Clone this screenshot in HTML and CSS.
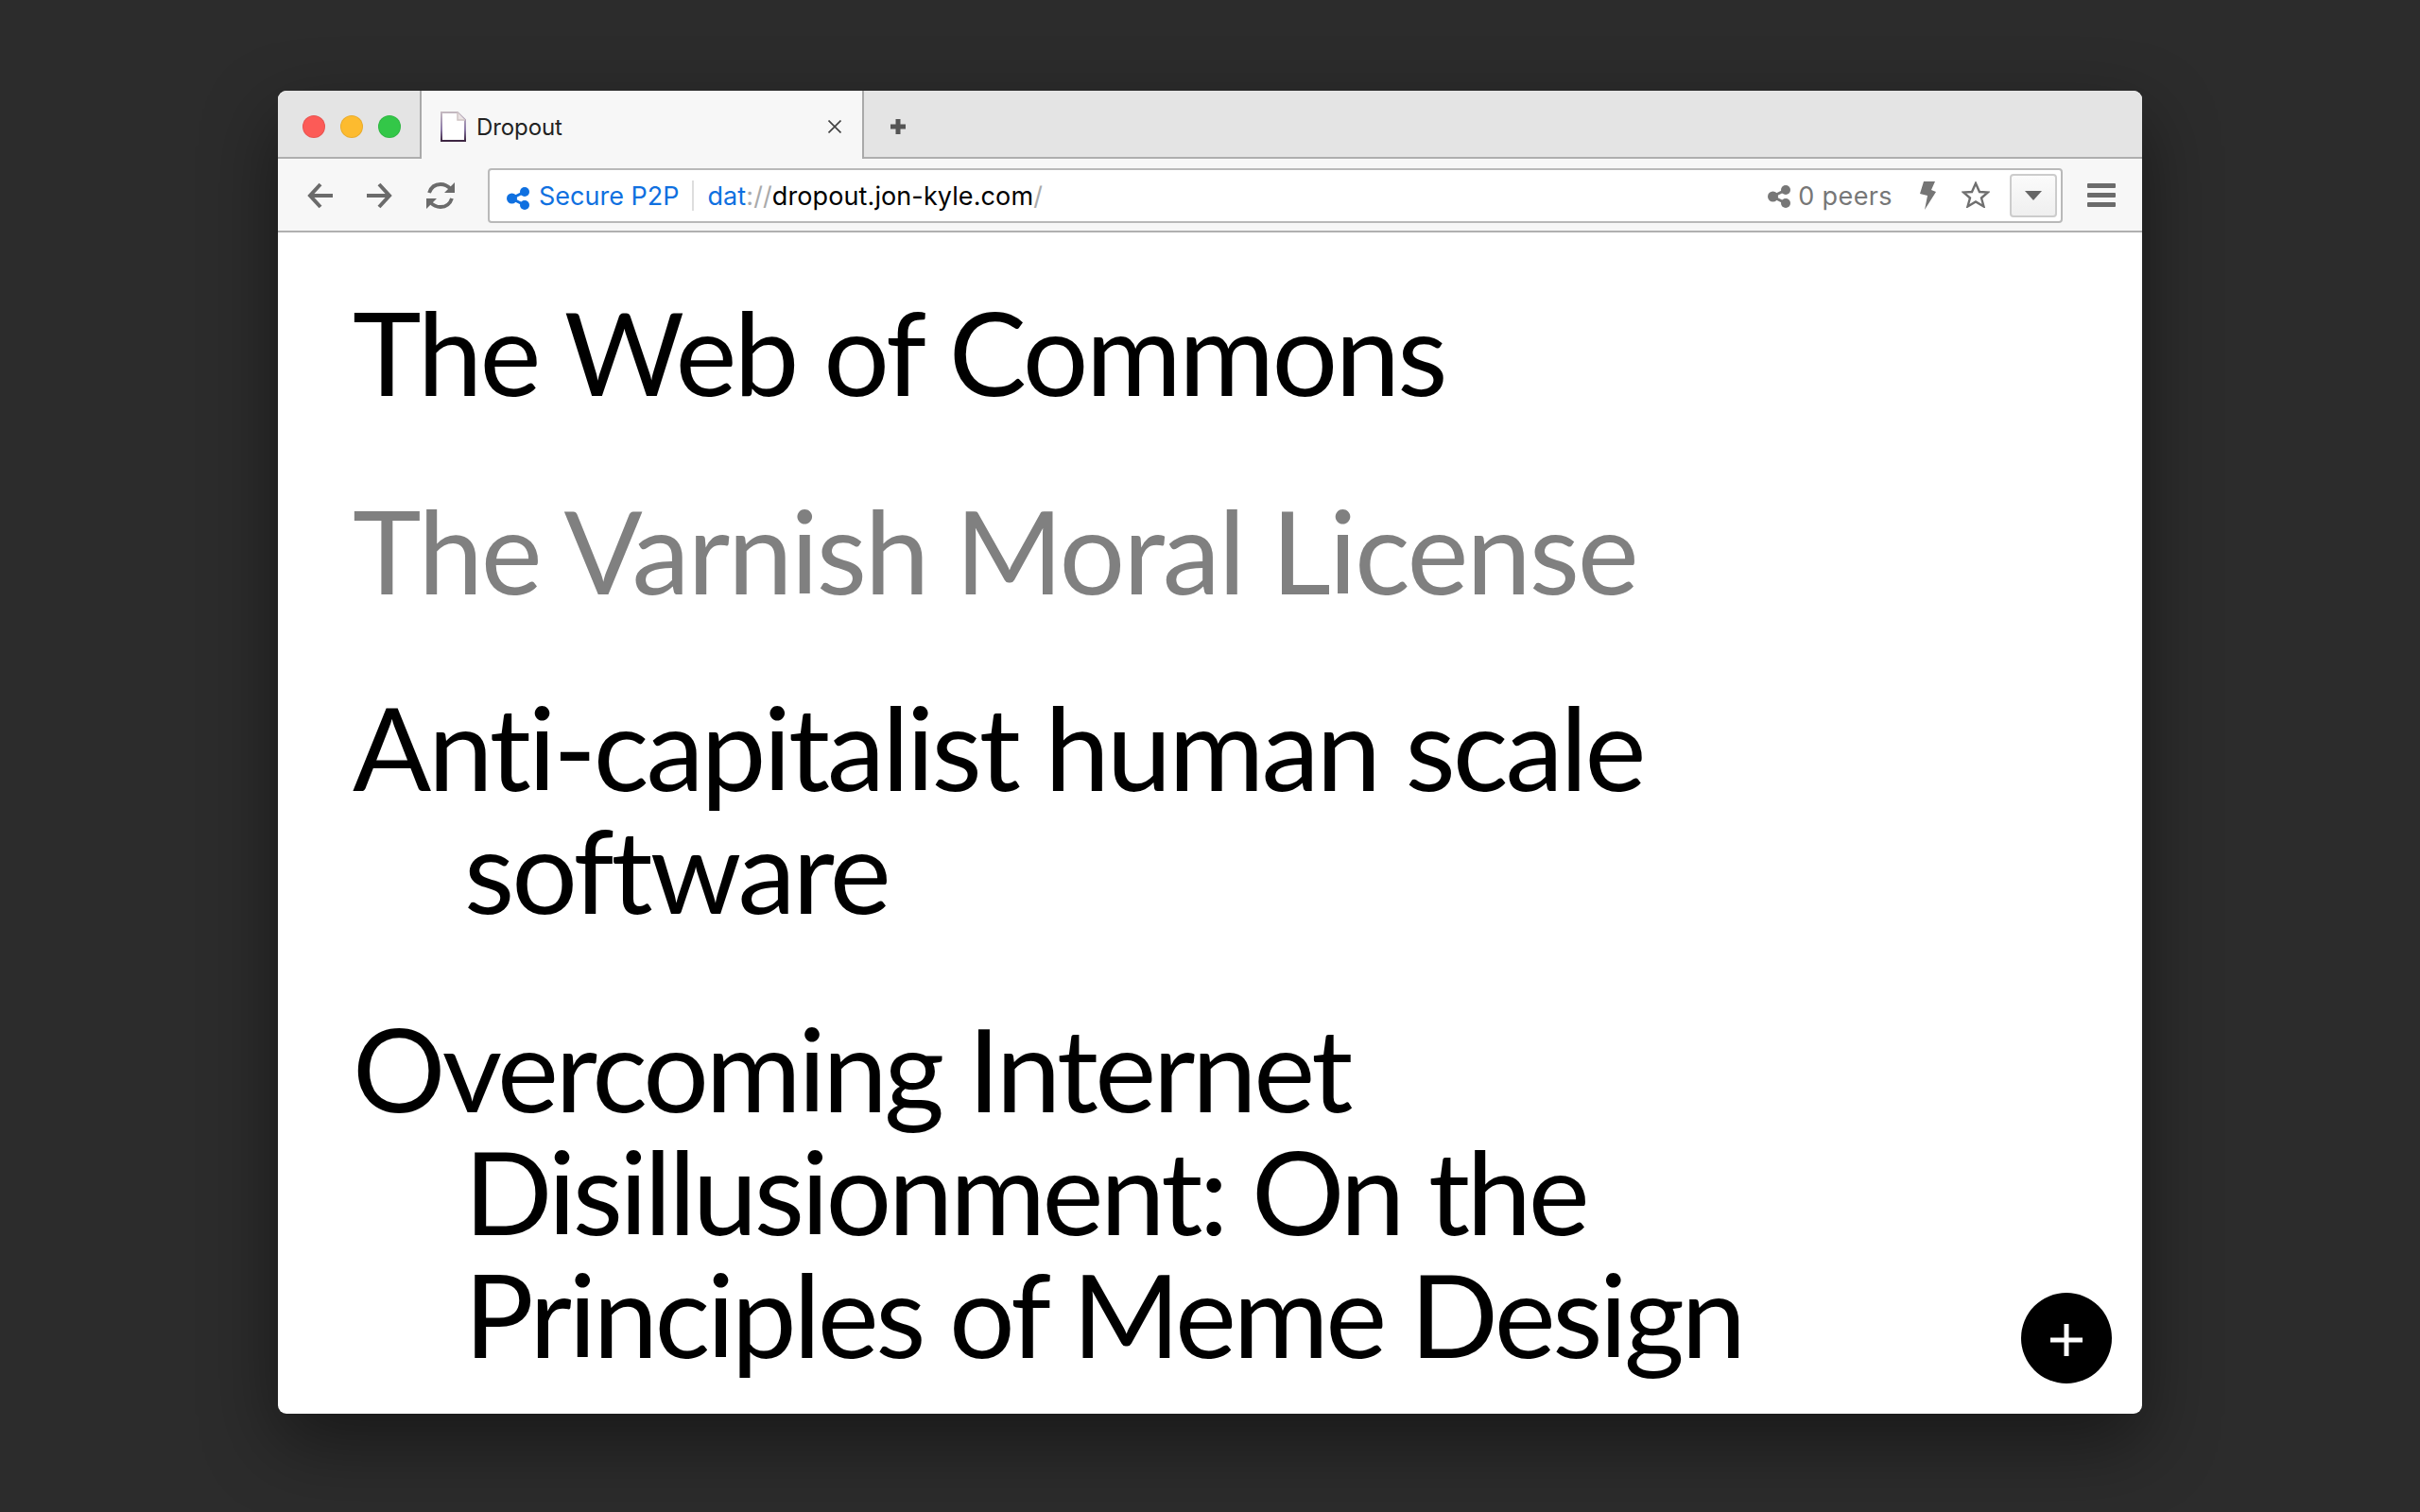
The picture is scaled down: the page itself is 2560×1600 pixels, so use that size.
FILE: index.html
```html
<!DOCTYPE html>
<html lang="en">
<head>
<meta charset="utf-8">
<title>Dropout</title>
<link rel="stylesheet" href="styles.css">
</head>
<body>
<div class="window">
  <div class="tabstrip">
    <div class="lights">
      <span class="light red"></span><span class="light yellow"></span><span class="light green"></span>
    </div>
    <div class="tab">
      <svg class="page-icon" width="27" height="32" viewBox="0 0 27 32"><defs><linearGradient id="pg" x1="0" y1="0" x2="0" y2="1"><stop offset="0" stop-color="#c4b9c0"/><stop offset=".6" stop-color="#8c7aa8"/><stop offset="1" stop-color="#3b2440"/></linearGradient></defs><path d="M1 1H18L26 9V31H1Z" fill="#fff" stroke="url(#pg)" stroke-width="2"/><path d="M18 1V9H26" fill="#ebe4e4" stroke="#cfc4c4" stroke-width="1.500"/></svg>
      <span class="tab-title">Dropout</span>
      <svg class="tab-close" width="14" height="14" viewBox="0 0 14 14"><path d="M.5 .5L13.500 13.500M13.500 .5L.5 13.500" stroke="#444" stroke-width="1.700"/></svg>
    </div>
    <svg class="newtab" width="16" height="16" viewBox="0 0 16 16"><path d="M8 0V16M0 8H16" stroke="#555" stroke-width="5"/></svg>
  </div>
  <div class="toolbar">
    <svg class="nav back" width="27" height="28" viewBox="0 0 27 28"><path d="M14 2L3 14L14 26M3 14H27" fill="none" stroke="#6b6b6b" stroke-width="4"/></svg>
    <svg class="nav fwd" width="27" height="28" viewBox="0 0 27 28"><path d="M13 2L24 14L13 26M24 14H0" fill="none" stroke="#6b6b6b" stroke-width="4"/></svg>
    <svg class="nav reload" width="30" height="30" viewBox="0 0 30 30"><path d="M3 12C5 6 9 3 15 3C20 3 23 5 26 8M27 18C25 24 21 27 15 27C10 27 7 25 4 22" fill="none" stroke="#6b6b6b" stroke-width="3.800"/><path d="M30 1V12H19ZM0 29V18H11Z" fill="#6b6b6b"/></svg>
    <div class="urlbar">
      <svg class="share" width="24" height="24" viewBox="0 0 24 24"><path d="M19 5L5 12L19 19" fill="none" stroke="#0f70e0" stroke-width="3"/><circle cx="19" cy="5" r="5" fill="#0f70e0"/><circle cx="5.500" cy="12" r="5.500" fill="#0f70e0"/><circle cx="19" cy="19" r="5" fill="#0f70e0"/></svg>
      <span class="secure">Secure P2P</span>
      <span class="sep"></span>
      <span class="url"><span class="scheme">dat</span><span class="dim">://</span>dropout.jon-kyle.com<span class="dim">/</span></span>
      <span class="spacer"></span>
      <svg class="share-grey" width="24" height="24" viewBox="0 0 24 24"><path d="M19 5L5 12L19 19" fill="none" stroke="#777" stroke-width="3"/><circle cx="19" cy="5" r="5" fill="#777"/><circle cx="5.500" cy="12" r="5.500" fill="#777"/><circle cx="19" cy="19" r="5" fill="#777"/></svg>
      <span class="peers">0 peers</span>
      <svg class="bolt" width="18" height="30" viewBox="0 0 18 30"><path d="M5 0H17L13 9L18 11L6 30L9 15L1 13Z" fill="#757575"/></svg>
      <svg class="star" width="30" height="28" viewBox="0 0 30 28"><path d="M15 2L19 11L28 11.500L21 17.500L23.500 26.500L15 21.500L6.500 26.500L9 17.500L2 11.500L11 11Z" fill="none" stroke="#6f6f6f" stroke-width="2.400"/></svg>
      <span class="dropdown"><span class="caret"></span></span>
    </div>
    <div class="menu"><span></span><span></span><span></span></div>
  </div>
  <main class="content">
    <a class="entry">The Web of Commons</a>
    <a class="entry muted">The Varnish Moral License</a>
    <a class="entry snug">Anti-capitalist human scale software</a>
    <a class="entry snugger">Overcoming Internet Disillusionment: On the Principles of Meme Design</a>
  </main>
  <button class="fab"><svg width="34" height="34" viewBox="0 0 34 34"><path d="M17 0V34M0 17H34" stroke="#fff" stroke-width="5"/></svg></button>
</div>
</body>
</html>
```
FILE: styles.css
```css
html, body { margin: 0; height: 100%; }
body {
  background: #2c2c2c;
  padding: 96px 0 0 294px;
  box-sizing: border-box;
  overflow: hidden;
  font-family: "Inter", "Liberation Sans", sans-serif;
}
.window {
  position: relative;
  width: 1972px;
  height: 1400px;
  border-radius: 9px;
  overflow: hidden;
  background: #fff;
  display: flex;
  flex-direction: column;
  box-shadow: 0 30px 80px rgba(0, 0, 0, .45);
}
.tabstrip {
  height: 72px;
  flex: none;
  box-sizing: border-box;
  background: #e4e4e4;
  border-bottom: 2px solid #aeaeae;
  display: flex;
  align-items: flex-start;
}
.lights {
  width: 150px;
  height: 76px;
  display: flex;
  align-items: center;
  gap: 16px;
  padding-left: 26px;
  box-sizing: border-box;
}
.light { width: 24px; height: 24px; border-radius: 50%; box-sizing: border-box; border: 1px solid rgba(0,0,0,.08); }
.red { background: #fc5b57; }
.yellow { background: #fdbb2f; }
.green { background: #33c748; }
.tab {
  width: 470px;
  height: 72px;
  flex: none;
  box-sizing: border-box;
  background: #f7f7f7;
  border-left: 2px solid #a9a9a9;
  border-right: 2px solid #a9a9a9;
  display: flex;
  align-items: center;
  padding: 4px 22px 0 20px;
}
.page-icon { margin-right: 11px; flex: none; }
.tab-title { font-size: 24px; color: #222; flex: 1; letter-spacing: -.1px; }
.newtab { margin: 30px 0 0 28px; flex: none; }
.toolbar {
  height: 78px;
  flex: none;
  box-sizing: border-box;
  background: #f7f7f7;
  border-bottom: 2px solid #b0b0b0;
  display: flex;
  align-items: center;
  padding: 1px 0 0 31px;
}
.nav { flex: none; }
.fwd { margin-left: 36px; }
.reload { margin-left: 36px; }
.urlbar {
  margin-left: 35px;
  width: 1666px;
  height: 58px;
  flex: none;
  box-sizing: border-box;
  background: #fff;
  border: 2px solid #b9b9b9;
  border-radius: 4px;
  display: flex;
  align-items: center;
  padding: 0 4px 0 18px;
  font-size: 27px;
}
.share { flex: none; margin-top: 6px; }
.secure { color: #0f70e0; margin-left: 10px; padding-top: 2px; }
.sep { width: 2px; height: 32px; background: #ddd; margin: 0 14px; }
.url { color: #000; letter-spacing: .1px; padding-top: 2px; }
.scheme { color: #0f70e0; }
.dim { color: #aaa; }
.spacer { flex: 1; }
.share-grey { flex: none; margin-top: 2px; }
.peers { color: #777; margin-left: 8px; letter-spacing: .4px; padding-top: 2px; }
.bolt { margin-left: 28px; flex: none; }
.star { margin: 0 0 2px 27px; flex: none; }
.dropdown {
  margin-left: 21px;
  width: 50px;
  height: 46px;
  flex: none;
  box-sizing: border-box;
  border: 2px solid #ccc;
  border-radius: 4px;
  background: linear-gradient(#fbfbfb, #efefef);
  display: flex;
  align-items: center;
  justify-content: center;
}
.caret { width: 0; height: 0; border: 9px solid transparent; border-top: 10px solid #666; border-bottom: 0; }
.menu { margin-left: 26px; width: 30px; display: flex; flex-direction: column; gap: 5px; }
.menu span { height: 5px; background: #6b6b6b; border-radius: 1px; }
.content {
  flex: 1;
  padding: 61px 160px 0 79px;
  font-family: "Lato", sans-serif;
  font-size: 123px;
  line-height: 130px;
  letter-spacing: -2.8px;
  color: #000;
}
.entry {
  display: block;
  padding-left: 118px;
  text-indent: -118px;
  margin-bottom: 80px;
}
.muted { color: #808080; letter-spacing: -2.2px; margin-bottom: 78px; }
.snug { letter-spacing: -3.05px; }
.snugger { letter-spacing: -3.5px; }
.fab {
  position: absolute;
  left: 1844px;
  top: 1272px;
  width: 96px;
  height: 96px;
  border: 0;
  padding: 4px 0 0;
  border-radius: 50%;
  background: #000;
  display: flex;
  align-items: center;
  justify-content: center;
}
```
